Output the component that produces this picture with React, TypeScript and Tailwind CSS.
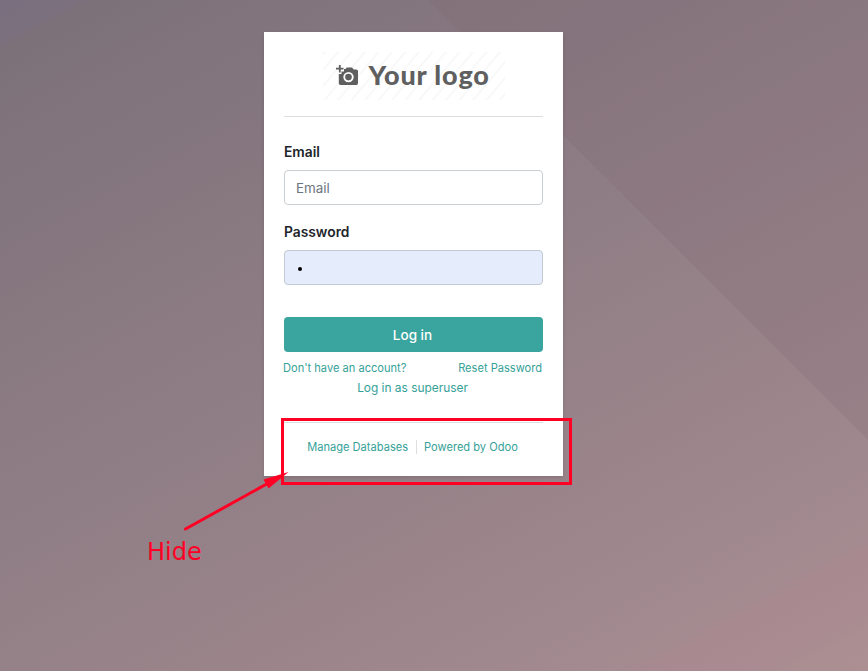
import React from "react";

const link = "text-[#35a198] whitespace-nowrap";

function Backdrop() {
  return (
    <svg className="absolute inset-0 h-full w-full" viewBox="0 0 868 671" preserveAspectRatio="none" aria-hidden="true">
      <defs>
        <linearGradient id="base" gradientUnits="userSpaceOnUse" x1="0" y1="0" x2="483" y2="886">
          <stop offset="0" stopColor="#796f7e" />
          <stop offset="0.036" stopColor="#7b707e" />
          <stop offset="0.046" stopColor="#7d7179" />
          <stop offset="0.41" stopColor="#8d7c84" />
          <stop offset="0.75" stopColor="#9d868c" />
          <stop offset="0.875" stopColor="#a38b90" />
          <stop offset="0.89" stopColor="#a7898f" />
          <stop offset="0.94" stopColor="#a98b91" />
          <stop offset="0.96" stopColor="#aa8e91" />
          <stop offset="1" stopColor="#ad8f92" />
        </linearGradient>
      </defs>
      <rect width="868" height="671" fill="url(#base)" />
      <path d="M428 0H868V440Z" fill="#7c626c" fillOpacity="0.2" />
    </svg>
  );
}

function Logo() {
  return (
    <div className="relative mx-auto flex h-[48px] w-[182px] items-center">
      <svg className="absolute inset-0" width="182" height="48" viewBox="0 0 182 48" aria-hidden="true">
        <defs>
          <pattern id="stripes" width="13.5" height="48" patternUnits="userSpaceOnUse" patternTransform="skewX(-40)">
            <rect width="3" height="48" fill="#f9f9f9" />
          </pattern>
        </defs>
        <rect width="182" height="48" fill="url(#stripes)" />
      </svg>
      <svg className="relative ml-[13px] shrink-0" width="23" height="22" viewBox="0 0 23 22" aria-hidden="true">
        <path fill="#5f5f5f" fillRule="evenodd" d="M8 4H9.4L10.8 2.6H16L17.8 4.4H20.3Q22 4.4 22 6.1V18.2Q22 20 20.3 20H4.5Q2.8 20 2.8 18.2V9H5.5V6.4H8ZM12.5 6.9A5.2 5.2 0 1 0 12.5 17.3A5.2 5.2 0 1 0 12.5 6.9Z" />
        <circle cx="12.5" cy="12.1" r="3.3" fill="#5f5f5f" />
        <path stroke="#5f5f5f" strokeWidth="1.8" d="M3.8 0V7.4M0 3.7H7.5" />
      </svg>
      <span className="relative mb-[2px] ml-[10px] whitespace-nowrap font-['Lato','Liberation_Sans',sans-serif] text-[27px] leading-[32px] font-black tracking-[0.85px] text-[#5f5f5f]">Your logo</span>
    </div>
  );
}

export default function App() {
  return (
    <main className="relative h-[671px] w-[868px] overflow-hidden font-['Inter','Liberation_Sans',sans-serif]">
      <Backdrop />
      <section className="relative mt-[32px] ml-[264px] flex h-[444px] w-[299px] flex-col bg-white px-[20px] pt-[20px] shadow-[0_2px_4px_rgba(0,0,0,0.12)]">
        <Logo />
        <hr className="mt-4 border-[#dcdfe1]" />
        <label htmlFor="email" className="mt-[25px] text-[13.8px] leading-[21px] font-semibold text-[#212529]">Email</label>
        <input id="email" type="text" placeholder="Email" className="mt-[7px] h-[35px] rounded-[4px] border border-[#c9ced3] px-[11px] text-[13.4px] text-[#212529] placeholder:text-[#6c757d]" />
        <label htmlFor="password" className="mt-[17px] text-[13.8px] leading-[21px] font-semibold text-[#212529]">Password</label>
        <div id="password" className="mt-[7px] flex h-[35px] items-center rounded-[4px] border border-[#c3cad3] bg-[#e5edfc] pl-[13px]">
          <span className="mt-[3px] h-[4px] w-[4px] rounded-full bg-black" />
        </div>
        <button className="mt-[32px] h-[35px] shrink-0 rounded-[4px] bg-[#3aa59e] pt-[2px] pr-[2px] text-[13.5px] font-medium text-white">Log in</button>
        <div className="mt-[8px] -ml-px flex justify-between pr-px text-[11.1px] leading-[17px]">
          <a className={link}>Don't have an account?</a>
          <a className={link}>Reset Password</a>
        </div>
        <a className={`${link} mt-[1px] pr-[2px] text-center text-[11.9px] leading-[20px]`}>Log in as superuser</a>
        <hr className="mt-[24px] border-[#dcdfe1]" />
        <div className="mt-[17px] flex justify-center pr-[2px] text-[11.1px] leading-[14px]">
          <a className={`${link} border-r border-[#dcdfe1] pr-[8px]`}>Manage Databases</a>
          <a className={`${link} pl-[7px]`}>Powered by Odoo</a>
        </div>
      </section>
      <div className="absolute top-[418px] left-[281px] h-[67px] w-[291px] border-3 border-[#ff0024]" />
      <svg className="absolute top-[465px] left-[180px]" width="112" height="70" viewBox="180 465 112 70" aria-hidden="true">
        <path d="M185.5 529L272 481" stroke="#ff0024" strokeWidth="3" strokeLinecap="round" />
        <path d="M288.5 472L263.5 479.5L268.5 488.5Z" fill="#ff0024" />
      </svg>
      <span className="absolute top-[537px] left-[147px] font-['DejaVu_Sans',sans-serif] text-[24px] leading-[30px] text-[#ff0024]">Hide</span>
    </main>
  );
}
